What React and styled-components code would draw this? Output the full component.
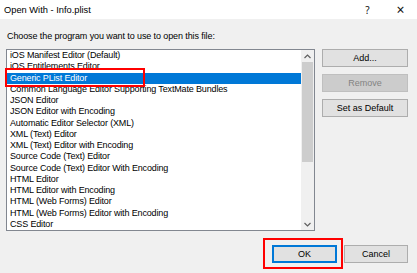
import React from 'react';
import styled, { createGlobalStyle } from 'styled-components';

const GlobalStyle = createGlobalStyle`
  html, body {
    margin: 0;
    padding: 0;
    background: #f0f0f0;
  }
  body {
    font-family: "Liberation Sans", "Noto Sans", sans-serif;
    font-size: 9px;
    color: #000;
  }
`;

const Window = styled.div`
  width: 417px;
  height: 273px;
  background: #f0f0f0;
  display: flex;
  flex-direction: column;
  overflow: hidden;
`;

const TitleBar = styled.div`
  height: 19px;
  background: #fff;
  display: flex;
  align-items: center;
  padding-left: 4px;
  font-size: 9.3px;
`;

const Title = styled.div`
  flex: 1;
`;

const TitleButton = styled.div`
  width: 33px;
  text-align: center;
  font-family: "Noto Sans", sans-serif;
  font-size: ${(p) => (p.big ? '14px' : '10px')};
  color: #111;
`;

const Body = styled.div`
  flex: 1;
  display: flex;
  flex-direction: column;
  padding: 12px 9px 0 6px;
`;

const Label = styled.div`
  padding-left: 1px;
  height: 18px;
  letter-spacing: -0.1px;
`;

const Main = styled.div`
  display: flex;
  gap: 7px;
`;

const ListBox = styled.div`
  position: relative;
  width: 307px;
  height: 180px;
  border: 1px solid #828790;
  background: #fff;
  display: flex;
`;

const Rows = styled.div`
  flex: 1;
  overflow: hidden;
`;

const Row = styled.div`
  height: 11.25px;
  line-height: 11.25px;
  padding-left: 3px;
  white-space: nowrap;
  letter-spacing: -0.15px;
  background: ${(p) => (p.selected ? '#0078d7' : 'transparent')};
  color: ${(p) => (p.selected ? '#fff' : '#000')};
`;

const ScrollBar = styled.div`
  width: 13px;
  background: #f0f0f0;
  display: flex;
  flex-direction: column;
`;

const ScrollArrow = styled.div`
  height: 12px;
  display: flex;
  align-items: center;
  justify-content: center;
`;

const ScrollTrack = styled.div`
  flex: 1;
  padding: 0 1px;
`;

const Thumb = styled.div`
  height: 100px;
  background: #cdcdcd;
`;

const Highlight = styled.div`
  position: absolute;
  left: -2px;
  top: 18px;
  width: 136px;
  height: 15px;
  border: 2px solid #ff0000;
  pointer-events: none;
`;

const SideButtons = styled.div`
  display: flex;
  flex-direction: column;
  gap: 7px;
`;

const Button = styled.button`
  width: ${(p) => p.w || 86}px;
  height: 18px;
  padding: 0;
  font-family: inherit;
  font-size: 9px;
  background: ${(p) => (p.disabled ? '#cccccc' : '#e1e1e1')};
  color: ${(p) => (p.disabled ? '#838383' : '#000')};
  border: ${(p) =>
    p.primary ? '2px solid #0078d7' : p.disabled ? '1px solid #bfbfbf' : '1px solid #adadad'};
  box-sizing: border-box;
`;

const Footer = styled.div`
  display: flex;
  justify-content: flex-end;
  align-items: center;
  gap: 7px;
  padding: 14px 0 0 0;
`;

const OkWrap = styled.div`
  position: relative;
  &::after {
    content: '';
    position: absolute;
    left: -9px;
    right: -6px;
    top: -7px;
    bottom: -6px;
    border: 2px solid #ff0000;
  }
`;

const items = [
  'iOS Manifest Editor (Default)',
  'iOS Entitlements Editor',
  'Generic PList Editor',
  'Common Language Editor Supporting TextMate Bundles',
  'JSON Editor',
  'JSON Editor with Encoding',
  'Automatic Editor Selector (XML)',
  'XML (Text) Editor',
  'XML (Text) Editor with Encoding',
  'Source Code (Text) Editor',
  'Source Code (Text) Editor With Encoding',
  'HTML Editor',
  'HTML Editor with Encoding',
  'HTML (Web Forms) Editor',
  'HTML (Web Forms) Editor with Encoding',
  'CSS Editor',
];

const Chevron = ({ up }) => (
  <svg width="7" height="5" viewBox="0 0 7 5">
    <path
      d={up ? 'M0.5 4 L3.5 1 L6.5 4' : 'M0.5 1 L3.5 4 L6.5 1'}
      fill="none"
      stroke="#606060"
      strokeWidth="1.2"
    />
  </svg>
);

const App = () => (
  <Window>
    <GlobalStyle />
    <TitleBar>
      <Title>Open With - Info.plist</Title>
      <TitleButton>?</TitleButton>
      <TitleButton big>×</TitleButton>
    </TitleBar>
    <Body>
      <Label>Choose the program you want to use to open this file:</Label>
      <Main>
        <ListBox>
          <Rows>
            {items.map((item, i) => (
              <Row key={item} selected={i === 2}>
                {item}
              </Row>
            ))}
          </Rows>
          <ScrollBar>
            <ScrollArrow>
              <Chevron up />
            </ScrollArrow>
            <ScrollTrack>
              <Thumb />
            </ScrollTrack>
            <ScrollArrow>
              <Chevron />
            </ScrollArrow>
          </ScrollBar>
          <Highlight />
        </ListBox>
        <SideButtons>
          <Button>Add...</Button>
          <Button disabled>Remove</Button>
          <Button>Set as Default</Button>
        </SideButtons>
      </Main>
      <Footer>
        <OkWrap>
          <Button primary w={65}>OK</Button>
        </OkWrap>
        <Button w={64}>Cancel</Button>
      </Footer>
    </Body>
  </Window>
);

export default App;
